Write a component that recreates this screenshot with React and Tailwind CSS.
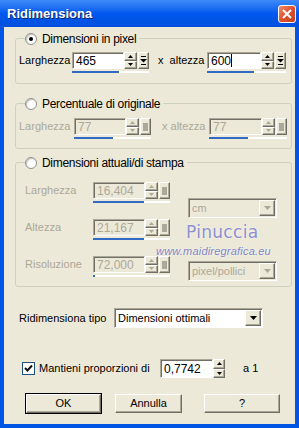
import React from "react";

const raised =
  "bg-[#ECE9D8] border border-t-white border-l-white border-r-[#716F64] border-b-[#716F64] shadow-[inset_-1px_-1px_0_#ACA899]";
const sunken =
  "border border-t-[#ACA899] border-l-[#ACA899] border-r-white border-b-white shadow-[inset_1px_1px_0_#716F64]";

function Tri({ up, color }) {
  return (
    <svg width="5" height="3" viewBox="0 0 5 3">
      <path d={up ? "M2.5 0L5 3H0Z" : "M0 0H5L2.5 3Z"} fill={color} />
    </svg>
  );
}

function Spinner({ disabled, cls = "w-[13px]" }) {
  const c = disabled ? "#ACA899" : "#000";
  return (
    <div className={`flex flex-col h-full shrink-0 ${cls}`}>
      <div className={`flex-1 flex items-center justify-center ${raised}`}>
        <Tri up color={c} />
      </div>
      <div className={`flex-1 flex items-center justify-center ${raised}`}>
        <Tri color={c} />
      </div>
    </div>
  );
}

function SpinField({ value, inputCls, blue, disabled, cursor }) {
  return (
    <div className="flex flex-col shrink-0">
      <div className="flex h-[17px] items-stretch">
        <div
          className={`${inputCls} shrink-0 ${sunken} flex items-center pl-[3px] ${
            disabled ? "bg-[#ECE9D8] text-[#ACA899]" : "bg-white text-black"
          } text-[12px]`}
        >
          {value}
          {cursor && <span className="w-px h-[13px] bg-black" />}
        </div>
        <Spinner disabled={disabled} />
        <div className={`ml-px w-[11px] shrink-0 flex items-center justify-center ${raised}`}>
          {disabled ? (
            <div className="w-[5px] h-[8px] bg-[#ACA899]" />
          ) : (
            <svg width="7" height="9" viewBox="0 0 7 9">
              <rect x="1" y="0" width="5" height="1" fill="#000" />
              <path d="M0 3H7L3.5 6.5Z" fill="#000" />
              <rect x="1" y="8" width="5" height="1" fill="#000" />
            </svg>
          )}
        </div>
      </div>
      <div className="mt-[2px] h-[2px] bg-white flex">
        <div className="h-full bg-[#316AC5]" style={{ width: blue }} />
      </div>
    </div>
  );
}

function Radio({ checked }) {
  return (
    <div className="w-[12px] h-[12px] shrink-0 rounded-full border border-[#8E8F8F] bg-white flex items-center justify-center shadow-[inset_1px_1px_1px_#C4C2B4]">
      {checked && <div className="w-[4px] h-[4px] rounded-full bg-black" />}
    </div>
  );
}

function GroupLabel({ text, checked }) {
  return (
    <div className="-mt-[8px] ml-[9px] h-[16px] w-fit flex items-center gap-[5px] pr-[3px] bg-[#ECE9D8] text-black text-[12px] tracking-[-0.3px]">
      <Radio checked={checked} />
      <span>{text}</span>
    </div>
  );
}

function Combo({ value, disabled, cls }) {
  return (
    <div
      className={`${cls} shrink-0 h-[20px] ${sunken} flex items-center ${
        disabled ? "bg-[#ECE9D8] text-[#ACA899]" : "bg-white text-black"
      }`}
    >
      <span className="flex-1 pl-[3px]">{value}</span>
      <div className={`w-[16px] h-[16px] mr-px flex items-center justify-center ${raised}`}>
        <svg width="7" height="4" viewBox="0 0 7 4">
          <path d="M0 0H7L3.5 4Z" fill={disabled ? "#ACA899" : "#000"} />
        </svg>
      </div>
    </div>
  );
}

function Button({ children, cls, isDefault }) {
  return (
    <div
      className={`${cls} shrink-0 h-[19px] flex items-center justify-center text-black ${
        isDefault ? "outline outline-1 outline-black" : ""
      } ${raised}`}
    >
      {children}
    </div>
  );
}

export default function App() {
  const dis = "text-[#ACA899]";
  return (
    <div className="w-[299px] h-[428px] flex flex-col bg-[#0055E5] font-['Liberation_Sans',Arial,sans-serif] text-[11px] whitespace-nowrap select-none">
      {/* Title bar */}
      <div className="h-[27px] flex items-center justify-between pl-[7px] pr-[3px] bg-gradient-to-b from-[#3D8AF7] via-[#0058EE] to-[#0050DC]">
        <span className="text-white font-bold text-[13px] [text-shadow:1px_1px_0_#0A246A]">Ridimensiona</span>
        <div className="w-[18px] h-[18px] rounded-[3px] border border-white bg-gradient-to-br from-[#EA8B6C] via-[#E0502B] to-[#C4401E] flex items-center justify-center">
          <svg width="10" height="10" viewBox="0 0 10 10">
            <path d="M1 1L9 9M9 1L1 9" stroke="#fff" strokeWidth="2" />
          </svg>
        </div>
      </div>

      {/* Body */}
      <div className="flex-1 mx-[4px] mb-[4px] bg-[#ECE9D8] flex flex-col pl-[11px] pr-[3px]">
        {/* Group 1 */}
        <div className="mt-[11px] h-[46px] border border-[#D0D0BF] rounded-[3px] flex flex-col">
          <GroupLabel text="Dimensioni in pixel" checked />
          <div className="mt-[5px] pl-[3px] flex items-start">
            <span className="w-[53px] shrink-0 h-[17px] flex items-center">Larghezza</span>
            <SpinField value="465" inputCls="w-[52px]" blue={47} />
            <span className="w-[58px] shrink-0 h-[17px] flex items-center pl-[9px]">x&nbsp; altezza</span>
            <SpinField value="600" inputCls="w-[54px]" blue={47} cursor />
          </div>
        </div>

        {/* Group 2 */}
        <div className="mt-[19px] h-[46px] border border-[#D0D0BF] rounded-[3px] flex flex-col">
          <GroupLabel text="Percentuale di originale" />
          <div className={`mt-[6px] pl-[3px] flex items-start ${dis}`}>
            <span className="w-[55px] shrink-0 h-[17px] flex items-center">Larghezza</span>
            <SpinField value="77" inputCls="w-[52px]" blue={39} disabled />
            <span className="w-[58px] shrink-0 h-[17px] flex items-center pl-[11px]">x altezza</span>
            <SpinField value="77" inputCls="w-[53px]" blue={39} disabled />
          </div>
        </div>

        {/* Group 3 */}
        <div className="relative mt-[13px] h-[125px] border border-[#D0D0BF] rounded-[3px] flex flex-col">
          <GroupLabel text="Dimensioni attuali/di stampa" />
          <div className={`flex pl-[9px] ${dis}`}>
            <div className="flex flex-col mt-[11px] gap-[16px]">
              {[
                ["Larghezza", "16,404", 51],
                ["Altezza", "21,167", 51],
                ["Risoluzione", "72,000", 2],
              ].map(([label, v, b]) => (
                <div key={label} className="flex items-start">
                  <span className="w-[68px] shrink-0 h-[17px] flex items-center">{label}</span>
                  <SpinField value={v} inputCls="w-[52px]" blue={b} disabled />
                </div>
              ))}
            </div>
            <div className="flex flex-col ml-[18px]">
              <Combo value="cm" disabled cls="mt-[27px] w-[89px]" />
              <Combo value="pixel/pollici" disabled cls="mt-[43px] w-[89px]" />
            </div>
          </div>
          {/* watermark */}
          <div className="absolute left-[170px] top-[61px] text-[17px] leading-none text-[#8C8FD0] font-['DejaVu_Sans',sans-serif] tracking-[0.3px] [text-shadow:0_0_2px_#fff]">
            Pinuccia
          </div>
          <div className="absolute left-[140px] top-[83px] text-[11px] italic leading-none text-[#7F84C4] font-['Liberation_Sans',sans-serif] tracking-[0.2px] [text-shadow:0_0_2px_#fff]">
            www.maidiregrafica.eu
          </div>
        </div>

        {/* Ridimensiona tipo */}
        <div className="mt-[21px] flex items-center">
          <span className="ml-[4px] w-[95px] shrink-0">Ridimensiona tipo</span>
          <Combo value="Dimensioni ottimali" cls="w-[149px]" />
        </div>

        {/* Mantieni proporzioni */}
        <div className="mt-[31px] flex items-center h-[19px]">
          <div className="ml-[7px] w-[13px] h-[13px] shrink-0 border border-[#1C5180] bg-white flex items-center justify-center">
            <svg width="9" height="9" viewBox="0 0 9 9">
              <path d="M1 4L3.5 6.5L8 1.5" stroke="#111" strokeWidth="2" fill="none" />
            </svg>
          </div>
          <span className="ml-[4px] w-[121px] shrink-0">Mantieni proporzioni di</span>
          <div className="flex h-[19px] shrink-0">
            <div className={`w-[53px] ${sunken} bg-white flex items-center pl-[3px] text-[12px]`}>0,7742</div>
            <Spinner cls="w-[12px]" />
          </div>
          <span className="ml-[18px]">a 1</span>
        </div>

        {/* Buttons */}
        <div className="mt-[16px] flex items-center">
          <Button cls="ml-[11px] w-[75px]" isDefault>
            OK
          </Button>
          <Button cls="ml-[14px] w-[67px]">Annulla</Button>
          <Button cls="ml-[22px] w-[76px]">?</Button>
        </div>
      </div>
    </div>
  );
}
